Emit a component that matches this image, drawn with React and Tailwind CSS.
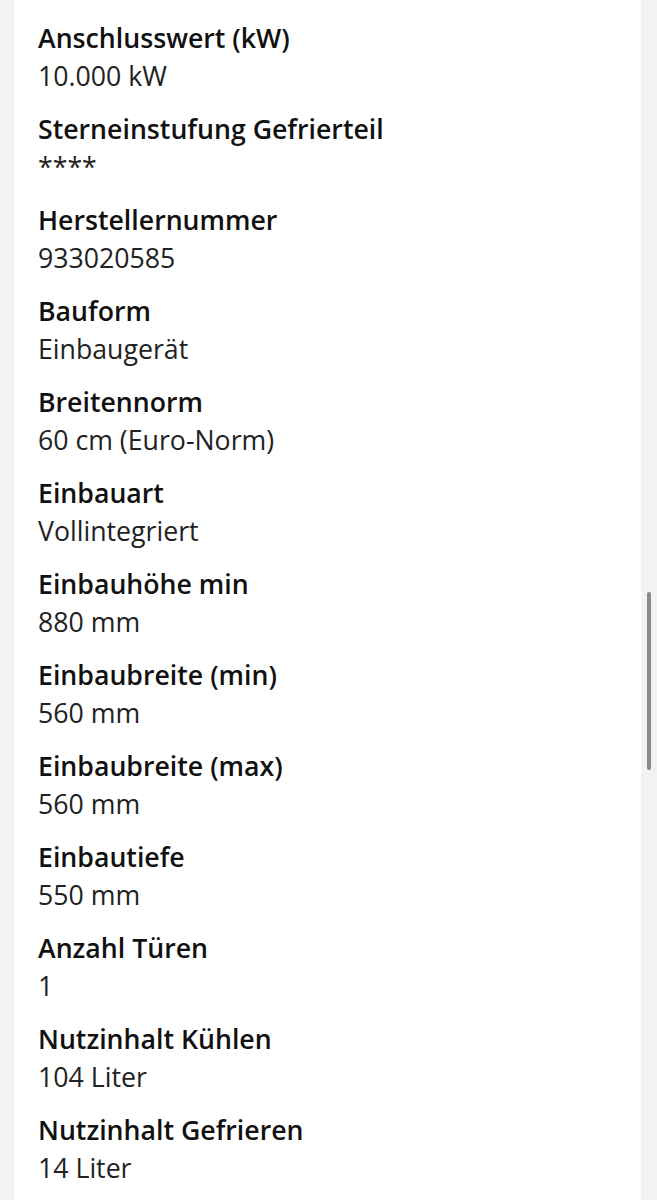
const specs = [
  ['Anschlusswert (kW)', '10.000 kW'],
  ['Sterneinstufung Gefrierteil', '****'],
  ['Herstellernummer', '933020585'],
  ['Bauform', 'Einbaugerät'],
  ['Breitennorm', '60 cm (Euro-Norm)'],
  ['Einbauart', 'Vollintegriert'],
  ['Einbauhöhe min', '880 mm'],
  ['Einbaubreite (min)', '560 mm'],
  ['Einbaubreite (max)', '560 mm'],
  ['Einbautiefe', '550 mm'],
  ['Anzahl Türen', '1'],
  ['Nutzinhalt Kühlen', '104 Liter'],
  ['Nutzinhalt Gefrieren', '14 Liter'],
];

export default function App() {
  return (
    <div className="flex h-[1200px] overflow-hidden bg-[#f2f2f2] font-['Open_Sans',sans-serif]">
      <div className="w-[14px] shrink-0" />
      <div className="flex-1 bg-white pl-[24px] pt-[19px]">
        {specs.map(([label, value]) => (
          <div key={label} className="mb-[15px]">
            <div className="text-[26.7px] leading-[38px] font-semibold text-[#111]">{label}</div>
            <div className="text-[26.7px] leading-[38px] text-[#222]">{value}</div>
          </div>
        ))}
      </div>
      <div className="flex w-[16px] shrink-0 justify-center pt-[592px]">
        <div className="h-[178px] w-[4px] rounded-full bg-[#8a8a8a]" />
      </div>
    </div>
  );
}
